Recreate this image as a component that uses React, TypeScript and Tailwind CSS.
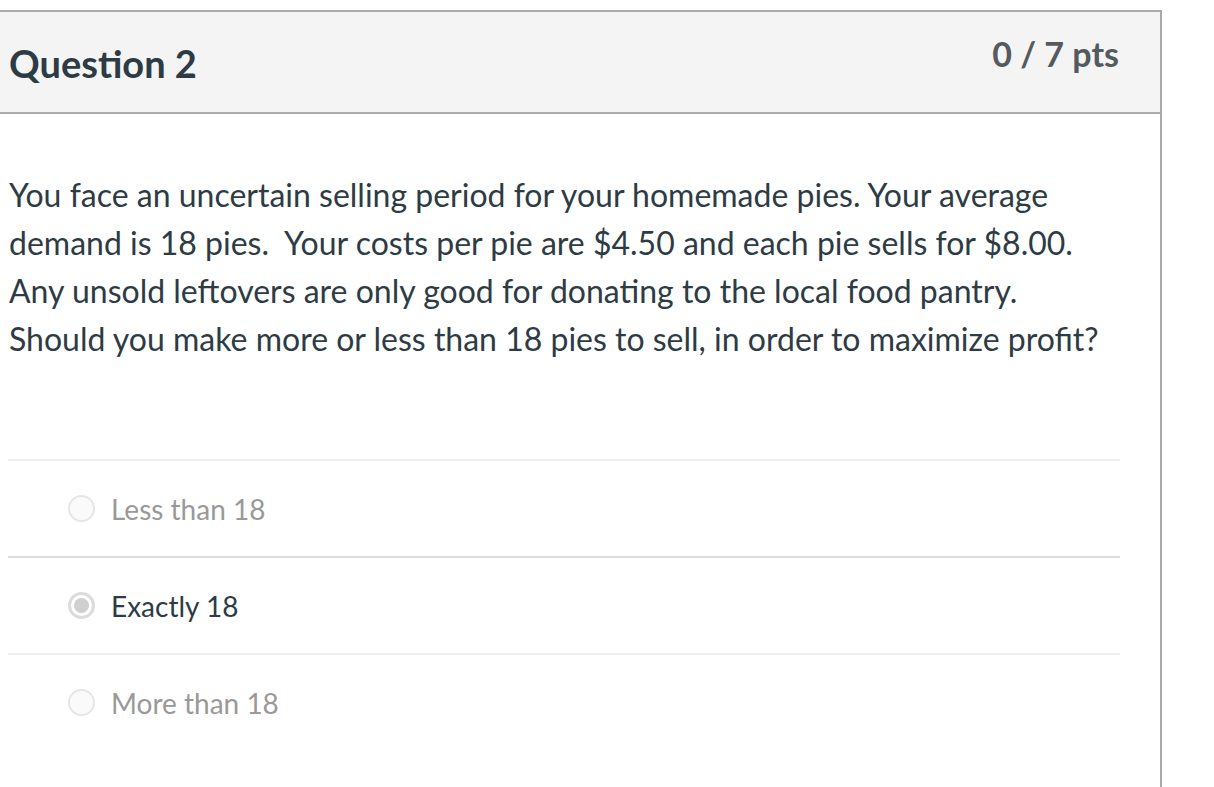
import React from 'react';

interface Answer {
  label: string;
  selected?: boolean;
}

const answers: Answer[] = [
  { label: 'Less than 18' },
  { label: 'Exactly 18', selected: true },
  { label: 'More than 18' },
];

function Radio({ selected }: { selected?: boolean }) {
  if (selected) {
    return (
      <span className="flex h-[27px] w-[27px] shrink-0 items-center justify-center rounded-full border-[3px] border-[#dcdcdc] bg-white">
        <span className="h-[15px] w-[15px] rounded-full bg-[#cfcfcf]" />
      </span>
    );
  }
  return <span className="h-[27px] w-[27px] shrink-0 rounded-full border-2 border-[#e6e6e6] bg-[#fafafa]" />;
}

export default function App() {
  return (
    <div className="min-h-[787px] bg-white pt-[10px]" style={{ fontFamily: 'Lato, "Open Sans", sans-serif' }}>
      <div className="w-[1162px] min-h-[777px] border-t-2 border-r-2 border-[#aaaaaa]">
        {/* header */}
        <div className="flex h-[102px] items-start justify-between border-b-2 border-[#aaaaaa] bg-[#f4f4f4] pl-[9px] pr-[41px]">
          <h2 className="pt-[32px] text-[38px] leading-[38px] font-bold text-[#2d3b45]">Question 2</h2>
          <div className="pt-[25px] text-[34px] leading-[34px] font-bold text-[#555a5e]">0 / 7 pts</div>
        </div>

        {/* question text */}
        <div className="pt-[57px] pl-[9px] pr-[40px]">
          <p className="text-[32px] leading-[48px] text-[#2d3b45]">
            You face an uncertain selling period for your homemade pies. Your average demand is 18 pies.&nbsp; Your
            costs per pie are $4.50 and each pie sells for $8.00. Any unsold leftovers are only good for donating to
            the local food pantry. Should you make more or less than 18 pies to sell, in order to maximize profit?
          </p>
        </div>

        {/* answers */}
        <div className="mt-[96px] ml-[8px] w-[1112px]">
          {answers.map((a, i) => (
            <div
              key={i}
              className={`flex h-[97px] items-center border-t-2 pl-[60px] ${i === 1 ? 'border-[#dddddd]' : 'border-[#eeeeee]'}`}
            >
              <Radio selected={a.selected} />
              <span className={`ml-[16px] text-[28px] ${a.selected ? 'text-[#2d3b45]' : 'text-[#999999]'}`}>
                {a.label}
              </span>
            </div>
          ))}
        </div>
      </div>
    </div>
  );
}
